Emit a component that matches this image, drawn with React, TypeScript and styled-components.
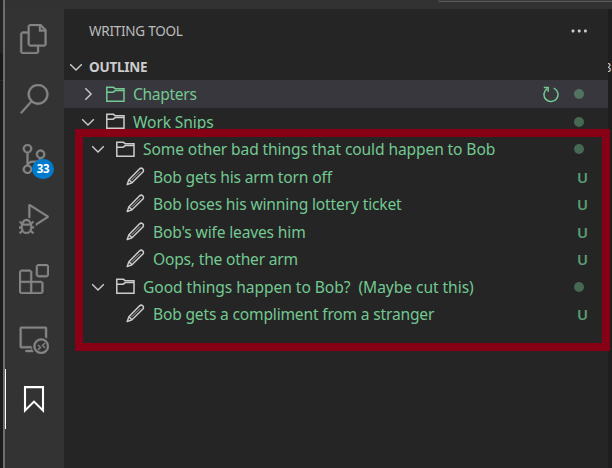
import React from 'react';
import styled, { createGlobalStyle } from 'styled-components';
import {
  VscFiles,
  VscSearch,
  VscSourceControl,
  VscDebugAlt,
  VscExtensions,
  VscRemoteExplorer,
} from 'react-icons/vsc';

const GlobalStyle = createGlobalStyle`
  * { box-sizing: border-box; }
  body { margin: 0; background: #1e1e1e; overflow: hidden; }
`;

const Window = styled.div`
  display: flex;
  width: 612px;
  height: 468px;
  overflow: hidden;
  background: #1e1e1e;
  color: #cccccc;
  font-family: 'Noto Sans', 'Open Sans', sans-serif;
`;

const Backdrop = styled.div`
  flex: none;
  width: 3px;
  background: linear-gradient(#232323 0 53px, #191919 53px 80px, #2a2a2a 80px 81px, #1c1c1c 81px);
`;

const Edge = styled.div`
  flex: none;
  width: 2px;
  background: #6e6e6e;
`;

const Frame = styled.div`
  flex: 1;
  min-width: 0;
  display: flex;
  flex-direction: column;
`;

const TitleBar = styled.div`
  height: 9px;
  display: flex;
  justify-content: flex-end;
  background: #323233;
`;

const CommandBox = styled.div`
  width: 174px;
  height: 2px;
  border-bottom: 1px solid #5c5c5c;
  border-bottom-left-radius: 3px;
  background: #3a3a3b;
`;

const Body = styled.div`
  flex: 1;
  display: flex;
`;

const ActivityBar = styled.nav`
  flex: none;
  width: 59px;
  background: #333333;
`;

const ActivityItem = styled.div<{ $active?: boolean }>`
  position: relative;
  height: 60px;
  display: flex;
  align-items: center;
  justify-content: center;
  padding-right: 1px;
  color: ${(p) => (p.$active ? '#ffffff' : '#858585')};
  box-shadow: ${(p) => (p.$active ? 'inset 1px 0 0 #ffffff' : 'none')};

  svg {
    stroke-width: ${(p) => (p.$active ? 2.1 : 0.3)};
  }
`;

const Badge = styled.span`
  position: absolute;
  left: 27px;
  top: 30px;
  width: 22px;
  height: 20px;
  border-radius: 10px;
  background: #007acc;
  color: #ffffff;
  font-size: 11.5px;
  font-weight: 700;
  line-height: 20px;
  text-align: center;
  letter-spacing: -0.3px;
`;

const SideBar = styled.aside`
  position: relative;
  flex: none;
  width: 544px;
  background: #252526;
`;

const SideTitle = styled.header`
  height: 44px;
  display: flex;
  align-items: center;
  justify-content: space-between;
  padding: 0 20px 0 25px;
  font-size: 13.5px;
  color: #bbbbbb;
`;

const SectionHeader = styled.div`
  height: 27.3px;
  display: flex;
  align-items: center;
  padding-left: 4px;
  font-size: 13.5px;
  font-weight: 700;
`;

const Label = styled.span<{ $track?: number }>`
  white-space: pre;
  letter-spacing: ${(p) => p.$track ?? 0}px;
`;

const Tree = styled.div`
  display: flex;
  flex-direction: column;
`;

const Row = styled.div<{ $indent: number; $hover?: boolean }>`
  height: 27.5px;
  display: flex;
  align-items: center;
  padding: 0 20px 0 ${(p) => p.$indent}px;
  color: #73c991;
  font-size: 15.6px;
  background: ${(p) => (p.$hover ? '#37373d' : 'transparent')};
`;

const IconSlot = styled.span<{ $width: number; $color?: string }>`
  width: ${(p) => p.$width}px;
  display: flex;
  align-items: center;
  color: ${(p) => p.$color ?? '#cccccc'};
`;

const Trailing = styled.span`
  margin-left: auto;
  display: flex;
  align-items: center;
`;

const Dot = styled.span`
  width: 10px;
  height: 10px;
  margin: 0 4px 0 14px;
  border-radius: 50%;
  background: #73c991;
  opacity: 0.42;
`;

const Status = styled.span`
  width: 11px;
  text-align: center;
  font-size: 14.8px;
  font-weight: 600;
  color: #5b9d73;
`;

const Highlight = styled.div`
  position: absolute;
  left: 11px;
  top: 120px;
  width: 535px;
  height: 222px;
  border: 8px solid #880015;
`;

const Editor = styled.div`
  flex: 1;
  min-width: 0;
  overflow: hidden;
  padding-top: 48px;
  background: #1e1e1e;
  font-size: 13px;
  line-height: 20px;
  text-indent: -4px;
`;

const svgProps = { fill: 'none', stroke: 'currentColor' } as const;

const Chevron = ({ open }: { open?: boolean }) => (
  <svg width="16" height="16" viewBox="0 0 16 16" {...svgProps} strokeWidth="1.4">
    <path d={open ? 'M2.2 5.2 8 11 13.8 5.2' : 'M5.3 2.2 11.1 8 5.3 13.8'} />
  </svg>
);

const Folder = () => (
  <svg width="19" height="17" viewBox="0 0 19 17" {...svgProps} strokeWidth="1.5">
    <path d="M.8 15.3V1.3H7.4L9.2 2.7H18V15.3Z" />
    <path d="M.8 6.2H7.2L9.2 4.6H18" />
  </svg>
);

const Pencil = () => (
  <svg width="19" height="20" viewBox="0 0 19 20" {...svgProps} strokeWidth="1.5" strokeLinejoin="round">
    <path d="M1.2 17.6 2.9 12.7 13.6 1.8Q15.2.5 16.7 1.8 18.1 3.4 16.9 5L6 15.8Z" />
    <path d="M2.9 12.7 6 15.8" />
    <path d="M5.4 13.2 14.2 4.4" strokeWidth="0.8" />
  </svg>
);

const Refresh = () => (
  <svg width="17" height="17" viewBox="0 0 17 17" {...svgProps} strokeWidth="1.5">
    <path d="M4.3 2.6A7 7 0 1 0 10.7 2.1" />
    <path d="M.8 1.4H5.2V5.8" />
  </svg>
);

const Bookmark = () => (
  <svg width="22" height="28" viewBox="0 0 22 28" {...svgProps}>
    <path d="M2 2.1H20V25.4L11 16.6 2 25.4Z" />
  </svg>
);

const More = () => (
  <svg width="17" height="4" viewBox="0 0 17 4" fill="#cccccc">
    <rect x="0.6" y="0.6" width="2.8" height="2.8" rx="1" />
    <rect x="6.8" y="0.6" width="2.8" height="2.8" rx="1" />
    <rect x="13" y="0.6" width="2.8" height="2.8" rx="1" />
  </svg>
);

type Entry = {
  text: string;
  kind: 'folder' | 'snip';
  indent: number;
  track: number;
  open?: boolean;
  hover?: boolean;
};

const entries: Entry[] = [
  { text: 'Chapters', kind: 'folder', indent: 16, track: -0.33, hover: true },
  { text: 'Work Snips', kind: 'folder', indent: 16, track: -0.12, open: true },
  { text: 'Some other bad things that could happen to Bob', kind: 'folder', indent: 26, track: -0.12, open: true },
  { text: 'Bob gets his arm torn off', kind: 'snip', indent: 62, track: -0.17 },
  { text: 'Bob loses his winning lottery ticket', kind: 'snip', indent: 62, track: -0.16 },
  { text: "Bob's wife leaves him", kind: 'snip', indent: 62, track: -0.17 },
  { text: 'Oops, the other arm', kind: 'snip', indent: 62, track: -0.2 },
  { text: 'Good things happen to Bob?  (Maybe cut this)', kind: 'folder', indent: 26, track: -0.06, open: true },
  { text: 'Bob gets a compliment from a stranger', kind: 'snip', indent: 62, track: -0.19 },
];

const TreeRow = ({ entry }: { entry: Entry }) => (
  <Row $indent={entry.indent} $hover={entry.hover}>
    {entry.kind === 'folder' ? (
      <>
        <IconSlot $width={26}>
          <Chevron open={entry.open} />
        </IconSlot>
        <IconSlot $width={27} $color={entry.hover ? '#73c991' : undefined}>
          <Folder />
        </IconSlot>
      </>
    ) : (
      <IconSlot $width={27}>
        <Pencil />
      </IconSlot>
    )}
    <Label $track={entry.track}>{entry.text}</Label>
    <Trailing>
      {entry.hover && <Refresh />}
      {entry.kind === 'folder' ? <Dot /> : <Status>U</Status>}
    </Trailing>
  </Row>
);

export default function App() {
  return (
    <>
      <GlobalStyle />
      <Window>
        <Backdrop />
        <Edge />
        <Frame>
          <TitleBar>
            <CommandBox />
          </TitleBar>
          <Body>
            <ActivityBar>
              <ActivityItem><VscFiles size={30} /></ActivityItem>
              <ActivityItem><VscSearch size={30} /></ActivityItem>
              <ActivityItem>
                <VscSourceControl size={30} />
                <Badge>33</Badge>
              </ActivityItem>
              <ActivityItem><VscDebugAlt size={30} /></ActivityItem>
              <ActivityItem><VscExtensions size={30} /></ActivityItem>
              <ActivityItem><VscRemoteExplorer size={30} /></ActivityItem>
              <ActivityItem $active><Bookmark /></ActivityItem>
            </ActivityBar>
            <SideBar>
              <SideTitle>
                <Label $track={-0.25}>WRITING TOOL</Label>
                <More />
              </SideTitle>
              <SectionHeader>
                <IconSlot $width={21}><Chevron open /></IconSlot>
                <Label $track={-0.25}>OUTLINE</Label>
              </SectionHeader>
              <Tree>
                {entries.map((entry) => (
                  <TreeRow key={entry.text} entry={entry} />
                ))}
              </Tree>
              <Highlight />
            </SideBar>
            <Editor>8</Editor>
          </Body>
        </Frame>
      </Window>
    </>
  );
}
